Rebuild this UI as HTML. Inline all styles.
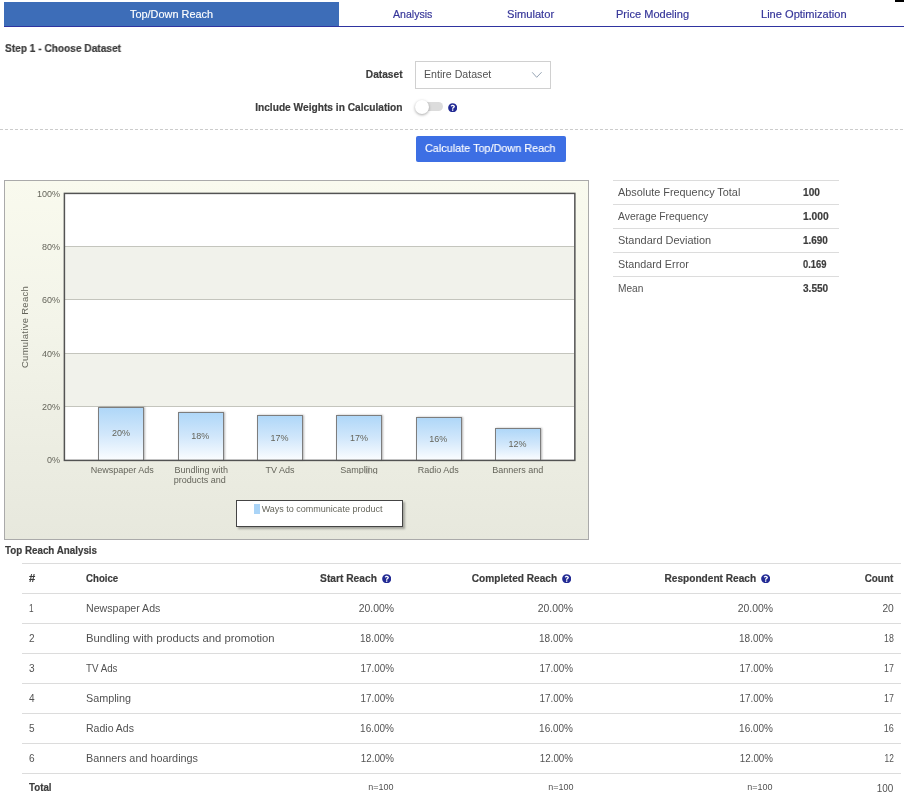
<!DOCTYPE html>
<html>
<head>
<meta charset="utf-8">
<title>Top/Down Reach</title>
<style>
*{box-sizing:border-box;margin:0;padding:0}
html,body{width:904px;height:805px;overflow:hidden;background:#fff}
body{font-family:"Liberation Sans",sans-serif;font-size:11.5px;color:#525252;position:relative}
.t{position:absolute;white-space:nowrap;line-height:14px;height:14px;transform-origin:0 0}
.t.r{transform-origin:100% 0}
.b{font-weight:bold;color:#3c3c3c;-webkit-text-stroke:0.2px #3c3c3c}
.nav{color:#353599;-webkit-text-stroke:0.18px #353599}
.w{color:#fff;-webkit-text-stroke:0.15px #fff}
.sm{font-size:9px}
.hl{position:absolute;height:1px;background:#dcdcdc}
.ico{position:absolute}
#root{position:absolute;left:0;top:0;width:904px;height:805px;overflow:hidden;will-change:transform}
#tabline{position:absolute;left:4px;top:26px;width:900px;height:1px;background:#2f34a0}
#tabact{position:absolute;left:4px;top:2px;width:335px;height:24px;background:#3d6db8}
#blk{position:absolute;left:895px;top:0;width:9px;height:2px;background:#000}
#sel{position:absolute;left:415px;top:61px;width:136px;height:28px;border:1px solid #d0d0d0;background:#fff}
#track{position:absolute;left:416px;top:102px;width:27px;height:9px;border-radius:5px;background:#dcdcdc}
#knob{position:absolute;left:414.5px;top:99.5px;width:14px;height:14px;border-radius:50%;background:#fff;box-shadow:0 1px 3px rgba(0,0,0,.35)}
#dash{position:absolute;left:0;top:129px;width:904px;height:1px;background:repeating-linear-gradient(90deg,#ccc 0,#ccc 3px,transparent 3px,transparent 5px)}
#btn{position:absolute;left:416px;top:136px;width:150px;height:26px;border-radius:2px;background:#3d6fe4}
#chart{position:absolute;left:4px;top:180px;width:585px;height:360px;border:1px solid #aaa;background:linear-gradient(180deg,#f9faee 0%,#f3f4e9 40%,#e7e8dd 100%)}
#plot{position:absolute;left:64px;top:193px;width:511px;height:268px;background:#fff}
#frame{position:absolute;left:60px;top:190px}
.band{position:absolute;left:65px;width:509px;background:#f1f2eb}
.gl{position:absolute;left:65px;width:509px;height:1px;background:#c4c5bd}
.c{position:absolute;white-space:nowrap;font-size:9px;line-height:10px;color:#65655b}
.c.r{text-align:right}
.bar{position:absolute;width:46px;border:1px solid #7d7d7d;border-bottom:none;background:linear-gradient(180deg,#afd7f8 0%,#d1e7fb 50%,#fbfdff 100%);box-shadow:1px 0 2px rgba(0,0,0,.3)}
#legend{position:absolute;left:236px;top:500px;width:167px;height:27px;border:1px solid #444;background:#fff;box-shadow:2px 2px 2px rgba(0,0,0,.3)}
#sw{position:absolute;left:254px;top:504px;width:6px;height:10px;background:#aad4f7}
</style>
</head>
<body>
<div id="root">
<div id="tabact"></div><div id="tabline"></div><div id="blk"></div>
<div id="sel"></div>
<svg style="position:absolute;left:531px;top:70px" width="12" height="10" viewBox="0 0 12 10"><path d="M1.2 2.3 L5.7 7.3 L10.6 2.2" fill="none" stroke="#8a9aac" stroke-width="0.9"/></svg>
<div id="track"></div><div id="knob"></div>
<svg class="ico" style="left:447.7px;top:102.7px" width="9.4" height="9.4" viewBox="0 0 512 512"><path fill="#222a94" d="M504 256c0 136.997-111.043 248-248 248S8 392.997 8 256C8 119.083 119.043 8 256 8s248 111.083 248 248zM262.655 90c-54.497 0-89.255 22.957-116.549 63.758-3.536 5.286-2.353 12.415 2.715 16.258l34.699 26.31c5.205 3.947 12.621 3.008 16.665-2.122 17.864-22.658 30.113-35.797 57.303-35.797 20.429 0 45.698 13.148 45.698 32.958 0 14.976-12.363 22.667-32.534 33.976C247.128 238.528 216 254.941 216 296v4c0 6.627 5.373 12 12 12h56c6.627 0 12-5.373 12-12v-1.333c0-28.462 83.186-29.647 83.186-106.667 0-58.002-60.165-102-116.531-102zM256 338c-25.365 0-46 20.635-46 46 0 25.364 20.635 46 46 46s46-20.636 46-46c0-25.365-20.635-46-46-46z"/></svg>
<div id="dash"></div><div id="btn"></div>
<div class="hl" style="left:613px;top:180px;width:226px"></div>
<div class="hl" style="left:613px;top:204px;width:226px"></div>
<div class="hl" style="left:613px;top:228px;width:226px"></div>
<div class="hl" style="left:613px;top:252px;width:226px"></div>
<div class="hl" style="left:613px;top:276px;width:226px"></div>
<div class="hl" style="left:22px;top:563px;width:879px"></div>
<div class="hl" style="left:22px;top:593px;width:879px"></div>
<div class="hl" style="left:22px;top:623px;width:879px"></div>
<div class="hl" style="left:22px;top:653px;width:879px"></div>
<div class="hl" style="left:22px;top:683px;width:879px"></div>
<div class="hl" style="left:22px;top:713px;width:879px"></div>
<div class="hl" style="left:22px;top:743px;width:879px"></div>
<div class="hl" style="left:22px;top:773px;width:879px"></div>
<svg class="ico" style="left:381.8px;top:573.5px" width="9.4" height="9.4" viewBox="0 0 512 512"><path fill="#222a94" d="M504 256c0 136.997-111.043 248-248 248S8 392.997 8 256C8 119.083 119.043 8 256 8s248 111.083 248 248zM262.655 90c-54.497 0-89.255 22.957-116.549 63.758-3.536 5.286-2.353 12.415 2.715 16.258l34.699 26.31c5.205 3.947 12.621 3.008 16.665-2.122 17.864-22.658 30.113-35.797 57.303-35.797 20.429 0 45.698 13.148 45.698 32.958 0 14.976-12.363 22.667-32.534 33.976C247.128 238.528 216 254.941 216 296v4c0 6.627 5.373 12 12 12h56c6.627 0 12-5.373 12-12v-1.333c0-28.462 83.186-29.647 83.186-106.667 0-58.002-60.165-102-116.531-102zM256 338c-25.365 0-46 20.635-46 46 0 25.364 20.635 46 46 46s46-20.636 46-46c0-25.365-20.635-46-46-46z"/></svg>
<svg class="ico" style="left:562.0px;top:573.5px" width="9.4" height="9.4" viewBox="0 0 512 512"><path fill="#222a94" d="M504 256c0 136.997-111.043 248-248 248S8 392.997 8 256C8 119.083 119.043 8 256 8s248 111.083 248 248zM262.655 90c-54.497 0-89.255 22.957-116.549 63.758-3.536 5.286-2.353 12.415 2.715 16.258l34.699 26.31c5.205 3.947 12.621 3.008 16.665-2.122 17.864-22.658 30.113-35.797 57.303-35.797 20.429 0 45.698 13.148 45.698 32.958 0 14.976-12.363 22.667-32.534 33.976C247.128 238.528 216 254.941 216 296v4c0 6.627 5.373 12 12 12h56c6.627 0 12-5.373 12-12v-1.333c0-28.462 83.186-29.647 83.186-106.667 0-58.002-60.165-102-116.531-102zM256 338c-25.365 0-46 20.635-46 46 0 25.364 20.635 46 46 46s46-20.636 46-46c0-25.365-20.635-46-46-46z"/></svg>
<svg class="ico" style="left:761.1px;top:573.5px" width="9.4" height="9.4" viewBox="0 0 512 512"><path fill="#222a94" d="M504 256c0 136.997-111.043 248-248 248S8 392.997 8 256C8 119.083 119.043 8 256 8s248 111.083 248 248zM262.655 90c-54.497 0-89.255 22.957-116.549 63.758-3.536 5.286-2.353 12.415 2.715 16.258l34.699 26.31c5.205 3.947 12.621 3.008 16.665-2.122 17.864-22.658 30.113-35.797 57.303-35.797 20.429 0 45.698 13.148 45.698 32.958 0 14.976-12.363 22.667-32.534 33.976C247.128 238.528 216 254.941 216 296v4c0 6.627 5.373 12 12 12h56c6.627 0 12-5.373 12-12v-1.333c0-28.462 83.186-29.647 83.186-106.667 0-58.002-60.165-102-116.531-102zM256 338c-25.365 0-46 20.635-46 46 0 25.364 20.635 46 46 46s46-20.636 46-46c0-25.365-20.635-46-46-46z"/></svg>
<div id="chart"></div>
<div id="plot"></div>
<div class="band" style="top:246px;height:53px"></div>
<div class="band" style="top:353px;height:53px"></div>
<div class="gl" style="top:246px"></div>
<div class="gl" style="top:299px"></div>
<div class="gl" style="top:353px"></div>
<div class="gl" style="top:406px"></div>
<div class="c r" style="left:20px;width:40px;top:188.5px">100%</div>
<div class="c r" style="left:20px;width:40px;top:241.5px">80%</div>
<div class="c r" style="left:20px;width:40px;top:294.5px">60%</div>
<div class="c r" style="left:20px;width:40px;top:348.5px">40%</div>
<div class="c r" style="left:20px;width:40px;top:401.5px">20%</div>
<div class="c r" style="left:20px;width:40px;top:454.7px">0%</div>
<div class="c" style="left:-24.7px;top:321.6px;width:100px;text-align:center;font-size:9.5px;letter-spacing:0.28px;transform:rotate(-90deg)">Cumulative Reach</div>
<div class="bar" style="left:98px;top:407px;height:53px"></div>
<div class="c" style="left:91.0px;width:60px;text-align:center;top:428.3px">20%</div>
<div class="c" style="left:82.2px;width:80px;text-align:center;top:465px">Newspaper Ads</div>
<div class="bar" style="left:178px;top:412px;height:48px"></div>
<div class="c" style="left:170.3px;width:60px;text-align:center;top:431.0px">18%</div>
<div class="c" style="left:161.3px;width:80px;text-align:center;top:465px">Bundling with</div>
<div class="c" style="left:159.7px;width:80px;text-align:center;top:475px">products and</div>
<div class="bar" style="left:257px;top:415px;height:45px"></div>
<div class="c" style="left:249.6px;width:60px;text-align:center;top:433.0px">17%</div>
<div class="c" style="left:240.0px;width:80px;text-align:center;top:465px">TV Ads</div>
<div class="bar" style="left:336px;top:415px;height:45px"></div>
<div class="c" style="left:328.9px;width:60px;text-align:center;top:433.0px">17%</div>
<div class="c" style="left:319.1px;width:80px;text-align:center;top:465px;height:8.7px;overflow:hidden">Sampling</div>
<div style="position:absolute;left:364.5px;top:466.4px;width:5.2px;height:7.2px;background:rgba(107,107,96,.2)"></div>
<div class="bar" style="left:416px;top:417px;height:43px"></div>
<div class="c" style="left:408.2px;width:60px;text-align:center;top:433.7px">16%</div>
<div class="c" style="left:398.2px;width:80px;text-align:center;top:465px">Radio Ads</div>
<div class="bar" style="left:495px;top:428px;height:32px"></div>
<div class="c" style="left:487.5px;width:60px;text-align:center;top:439.0px">12%</div>
<div class="c" style="left:477.8px;width:80px;text-align:center;top:465px">Banners and</div>
<svg id="frame" width="520" height="276" viewBox="60 190 520 276"><rect x="64.4" y="193.4" width="510.45" height="267" fill="none" stroke="#535353" stroke-width="1.5"/></svg>
<div id="legend"></div><div id="sw"></div>
<div class="c" style="left:261.7px;top:504px">Ways to communicate product</div>
<div class="t w" id="x0" style="left:130.2px;top:7.0px;transform:scaleX(0.948)">Top/Down Reach</div>
<div class="t nav" id="x1" style="left:392.6px;top:7.0px;transform:scaleX(0.920)">Analysis</div>
<div class="t nav" id="x2" style="left:507.2px;top:7.0px;transform:scaleX(0.970)">Simulator</div>
<div class="t nav" id="x3" style="left:616.1px;top:7.0px;transform:scaleX(0.960)">Price Modeling</div>
<div class="t nav" id="x4" style="left:760.9px;top:7.0px;transform:scaleX(0.963)">Line Optimization</div>
<div class="t b" id="x5" style="left:4.6px;top:41.4px;transform:scaleX(0.881)">Step 1 - Choose Dataset</div>
<div class="t b r" id="x6" style="right:501.8px;top:66.8px;transform:scaleX(0.885)">Dataset</div>
<div class="t" id="x7" style="left:424.3px;top:66.6px;transform:scaleX(0.923)">Entire Dataset</div>
<div class="t b r" id="x8" style="right:501.7px;top:100.3px;transform:scaleX(0.885)">Include Weights in Calculation</div>
<div class="t w" id="x9" style="left:425.2px;top:140.6px;transform:scaleX(0.943)">Calculate Top/Down Reach</div>
<div class="t" id="x10" style="left:617.7px;top:185.3px;transform:scaleX(0.944)">Absolute Frequency Total</div>
<div class="t b" id="x11" style="left:802.7px;top:185.3px;transform:scaleX(0.881)">100</div>
<div class="t" id="x12" style="left:617.7px;top:209.3px;transform:scaleX(0.901)">Average Frequency</div>
<div class="t b" id="x13" style="left:802.7px;top:209.3px;transform:scaleX(0.893)">1.000</div>
<div class="t" id="x14" style="left:617.7px;top:233.3px;transform:scaleX(0.953)">Standard Deviation</div>
<div class="t b" id="x15" style="left:802.7px;top:233.3px;transform:scaleX(0.865)">1.690</div>
<div class="t" id="x16" style="left:617.7px;top:257.3px;transform:scaleX(0.939)">Standard Error</div>
<div class="t b" id="x17" style="left:802.7px;top:257.3px;transform:scaleX(0.817)">0.169</div>
<div class="t" id="x18" style="left:617.7px;top:281.3px;transform:scaleX(0.883)">Mean</div>
<div class="t b" id="x19" style="left:802.7px;top:281.3px;transform:scaleX(0.876)">3.550</div>
<div class="t b" id="x20" style="left:4.9px;top:543.4px;transform:scaleX(0.852)">Top Reach Analysis</div>
<div class="t b" id="x21" style="left:28.6px;top:570.6px;transform:scaleX(0.968)">#</div>
<div class="t b" id="x22" style="left:86.0px;top:570.6px;transform:scaleX(0.840)">Choice</div>
<div class="t b r" id="x23" style="right:527.4px;top:570.6px;transform:scaleX(0.889)">Start Reach</div>
<div class="t b r" id="x24" style="right:347.1px;top:570.6px;transform:scaleX(0.879)">Completed Reach</div>
<div class="t b r" id="x25" style="right:148.0px;top:570.6px;transform:scaleX(0.880)">Respondent Reach</div>
<div class="t b r" id="x26" style="right:10.7px;top:570.6px;transform:scaleX(0.858)">Count</div>
<div class="t" id="x27" style="left:29.0px;top:600.7px;transform:scaleX(0.718)">1</div>
<div class="t" id="x28" style="left:86.0px;top:600.7px;transform:scaleX(0.924)">Newspaper Ads</div>
<div class="t  r" id="x29" style="right:510.4px;top:600.7px;transform:scaleX(0.907)">20.00%</div>
<div class="t  r" id="x30" style="right:330.5px;top:600.7px;transform:scaleX(0.907)">20.00%</div>
<div class="t  r" id="x31" style="right:131.4px;top:600.7px;transform:scaleX(0.907)">20.00%</div>
<div class="t  r" id="x32" style="right:10.7px;top:600.7px;transform:scaleX(0.891)">20</div>
<div class="t" id="x33" style="left:29.0px;top:630.7px;transform:scaleX(0.874)">2</div>
<div class="t" id="x34" style="left:86.0px;top:630.7px;transform:scaleX(0.980)">Bundling with products and promotion</div>
<div class="t  r" id="x35" style="right:510.4px;top:630.7px;transform:scaleX(0.871)">18.00%</div>
<div class="t  r" id="x36" style="right:330.5px;top:630.7px;transform:scaleX(0.871)">18.00%</div>
<div class="t  r" id="x37" style="right:131.4px;top:630.7px;transform:scaleX(0.871)">18.00%</div>
<div class="t  r" id="x38" style="right:10.7px;top:630.7px;transform:scaleX(0.766)">18</div>
<div class="t" id="x39" style="left:29.0px;top:660.7px;transform:scaleX(0.874)">3</div>
<div class="t" id="x40" style="left:86.0px;top:660.7px;transform:scaleX(0.850)">TV Ads</div>
<div class="t  r" id="x41" style="right:510.4px;top:660.7px;transform:scaleX(0.856)">17.00%</div>
<div class="t  r" id="x42" style="right:330.5px;top:660.7px;transform:scaleX(0.856)">17.00%</div>
<div class="t  r" id="x43" style="right:131.4px;top:660.7px;transform:scaleX(0.856)">17.00%</div>
<div class="t  r" id="x44" style="right:10.7px;top:660.7px;transform:scaleX(0.766)">17</div>
<div class="t" id="x45" style="left:29.0px;top:690.7px;transform:scaleX(0.874)">4</div>
<div class="t" id="x46" style="left:86.0px;top:690.7px;transform:scaleX(0.938)">Sampling</div>
<div class="t  r" id="x47" style="right:510.4px;top:690.7px;transform:scaleX(0.856)">17.00%</div>
<div class="t  r" id="x48" style="right:330.5px;top:690.7px;transform:scaleX(0.856)">17.00%</div>
<div class="t  r" id="x49" style="right:131.4px;top:690.7px;transform:scaleX(0.856)">17.00%</div>
<div class="t  r" id="x50" style="right:10.7px;top:690.7px;transform:scaleX(0.766)">17</div>
<div class="t" id="x51" style="left:29.0px;top:720.7px;transform:scaleX(0.874)">5</div>
<div class="t" id="x52" style="left:86.0px;top:720.7px;transform:scaleX(0.915)">Radio Ads</div>
<div class="t  r" id="x53" style="right:510.4px;top:720.7px;transform:scaleX(0.869)">16.00%</div>
<div class="t  r" id="x54" style="right:330.5px;top:720.7px;transform:scaleX(0.869)">16.00%</div>
<div class="t  r" id="x55" style="right:131.4px;top:720.7px;transform:scaleX(0.869)">16.00%</div>
<div class="t  r" id="x56" style="right:10.7px;top:720.7px;transform:scaleX(0.789)">16</div>
<div class="t" id="x57" style="left:29.0px;top:750.7px;transform:scaleX(0.874)">6</div>
<div class="t" id="x58" style="left:86.0px;top:750.7px;transform:scaleX(0.942)">Banners and hoardings</div>
<div class="t  r" id="x59" style="right:510.4px;top:750.7px;transform:scaleX(0.851)">12.00%</div>
<div class="t  r" id="x60" style="right:330.5px;top:750.7px;transform:scaleX(0.851)">12.00%</div>
<div class="t  r" id="x61" style="right:131.4px;top:750.7px;transform:scaleX(0.851)">12.00%</div>
<div class="t  r" id="x62" style="right:10.7px;top:750.7px;transform:scaleX(0.727)">12</div>
<div class="t b" id="x63" style="left:29.0px;top:780.0px;transform:scaleX(0.845)">Total</div>
<div class="t sm r" id="x64" style="right:510.5px;top:779.5px">n=100</div>
<div class="t sm r" id="x65" style="right:330.6px;top:779.5px">n=100</div>
<div class="t sm r" id="x66" style="right:131.6px;top:779.5px">n=100</div>
<div class="t  r" id="x67" style="right:10.8px;top:780.9px;transform:scaleX(0.860)">100</div>
</div>
</body>
</html>
